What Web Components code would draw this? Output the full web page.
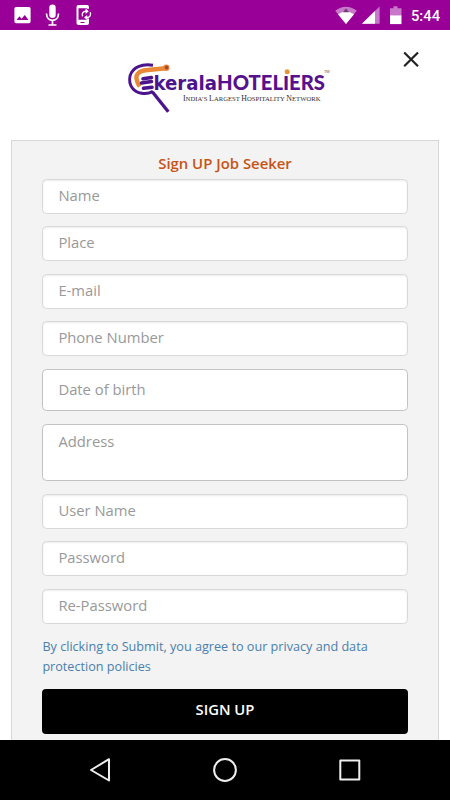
<!DOCTYPE html>
<html lang="en"><head><meta charset="utf-8"><title>Sign UP Job Seeker</title>
<style>html,body{margin:0;height:100%;overflow:hidden;background:#fff;font-family:"Open Sans","Noto Sans",sans-serif}</style></head>
<body><signup-app></signup-app>
<script>
const define=(name,html)=>customElements.define(name,class extends HTMLElement{
  constructor(){super();this.attachShadow({mode:'open'}).innerHTML=html;}
});
define('status-bar',`<style>
:host{display:flex;height:30px;background:#980098;color:#fff;flex:none}
svg{display:block}</style>
<svg width="450" height="30" viewBox="0 0 450 30">
<path fill="#fff" fill-rule="evenodd" d="M16 7h13q1.600 0 1.600 1.600v13q0 1.600-1.600 1.600h-13q-1.600 0-1.600-1.600v-13q0-1.600 1.600-1.600zM16.500 20h12l-3.700-5-3.200 3.800-2.200-2.600z"/>
<rect x="49.300" y="4.500" width="6.400" height="13.400" rx="3.200" fill="#fff"/>
<path d="M46.500 13.500c0 9 12 9 12 0M52.500 20v4.500M48.500 25h8" fill="none" stroke="#fff" stroke-width="1.700"/>
<path fill="#fff" fill-rule="evenodd" d="M78.500 5H87q2 0 2 2v1.800h-2.200V8.200h-8.300v11.600H87v-1.300h2V23q0 2-2 2h-8.500q-2 0-2-2V7q0-2 2-2zM80.500 22h4v1h-4z"/>
<path d="M82.600 16.400c-1.400-3 .8-5.400 3.600-5.100M90.200 12.300c1.400 3-.8 5.500-3.600 5.200" fill="none" stroke="#fff" stroke-width="1.400"/><path d="M85.600 8.600l3.200 2.700-3.200 2.600zM87.200 14.900v5.200l-3.200-2.600z" fill="#fff"/>
<path d="M335.200 10.700Q346 2.800 356.800 10.700L346 24z" fill="#c878c8"/><path d="M338 14.200Q346 9 354 14.200L346 24z" fill="#fff"/><path d="M343 12.200l3-4 3 4z" fill="#713f71"/>
<path d="M379.600 6.500v17.300h-17.700z" fill="#c878c8"/><path d="M375 11v12.800h-13.100z" fill="#fff"/>
<path d="M393.500 6.200h4v2h4v7.300h-11.500V8.200h3.500z" fill="#c878c8"/><path d="M390 15.300h11.500v8.800H390z" fill="#fff"/>
<text x="411" y="21" fill="#fff" font-family="Roboto" font-weight="500" font-size="15.500" textLength="29" lengthAdjust="spacingAndGlyphs">5:44</text>
</svg>`);
define('brand-header',`<style>
:host{display:block;height:110px;flex:none}svg{display:block}</style>
<svg width="450" height="110" viewBox="0 30 450 110">
<path d="M153 65.200C142 63.500 132.500 67 130 76c-2 9.500 4 16.300 11.500 17.300 5 .6 9-.2 11.500-2.200" fill="none" stroke="#4b148c" stroke-width="2.900"/>
<path d="M152.500 92L168.300 111.800" stroke="#4b148c" stroke-width="3.300"/>
<path d="M165.500 68.200L145.500 70.300C139 71 135.500 74.500 136.500 79c.6 3 1.500 5 3.200 7.500" fill="none" stroke="#e98837" stroke-width="4.400"/>
<circle cx="166.200" cy="67.800" r="3.200" fill="#e98837"/>
<circle cx="166.600" cy="67.500" r="1.900" fill="#a8483b"/>
<path d="M143 78.800l8.500-1.300M141.500 83l10-1.500M143.500 88.200l8.500-1" stroke="#4b148c" stroke-width="3.600" stroke-linecap="round"/>
<text x="153.500" y="90" fill="#4b148c" font-family="DejaVu Sans" font-weight="700" font-size="19.500" textLength="63.500" lengthAdjust="spacingAndGlyphs">kerala</text>
<text x="217" y="90" fill="#57118d" font-family="Lato" font-weight="900" font-size="21.500" textLength="108" lengthAdjust="spacingAndGlyphs">HOTELIERS</text>
<path d="M284 73h6v3h-6z" fill="#fff"/>
<circle cx="287.200" cy="71.800" r="2.500" fill="#e29532"/>
<text x="324" y="72.500" fill="#555" font-family="Liberation Sans" font-size="4" textLength="5.500">TM</text>
<text x="183" y="101.300" fill="#302c32" font-family="Liberation Serif" font-size="6.800" textLength="137.500" lengthAdjust="spacingAndGlyphs"><tspan font-size="8">I</tspan>NDIA’S <tspan font-size="8">L</tspan>ARGEST <tspan font-size="8">H</tspan>OSPITALITY <tspan font-size="8">N</tspan>ETWORK</text>
<path d="M404.200 52.500l13.800 13.700M418 52.500l-13.800 13.700" stroke="#222" stroke-width="2.200"/>
</svg>`);
define('form-field',`<style>
:host{display:block;box-sizing:border-box;height:34.700px;border:1.300px solid #d8d8d8;border-radius:4.500px;background:#fff;box-shadow:inset 0 1px 2px #00000014;padding:0 15px;color:#999;font-size:14.800px;line-height:31.500px;flex:none}
:host([tall]){height:42.100px;line-height:39px;border-color:#c2c2c2;box-shadow:none}
:host([area]){height:57.300px;line-height:33.500px;border-color:#c2c2c2;box-shadow:none}
</style><slot></slot>`);
define('submit-button',`<style>
:host{display:flex;align-items:center;justify-content:center;box-sizing:border-box;height:45px;padding-bottom:4px;background:#000;border-radius:4px;color:#fff;font-weight:600;font-size:14.800px;flex:none}
</style><slot></slot>`);
define('form-panel',`<style>
:host{display:flex;flex-direction:column;box-sizing:border-box;margin:0 11px;flex:1;min-height:0;overflow:hidden;background:#f3f3f3;border:solid #d7d7d7;border-width:1.500px 1.500px 0;padding:9px 30.400px 0}
h1{margin:0 0 3px;height:26px;line-height:26px;text-align:center;font-size:14.900px;font-weight:600;color:#c75416}
.f{display:flex;flex-direction:column;gap:12.800px}
p{margin:13px 0 12px;font-size:12.630px;line-height:20px;color:#4a7fae}
</style><h1>Sign UP Job Seeker</h1><div class="f"><form-field>Name</form-field><form-field>Place</form-field><form-field>E-mail</form-field><form-field>Phone Number</form-field><form-field tall>Date of birth</form-field><form-field area>Address</form-field><form-field>User Name</form-field><form-field>Password</form-field><form-field>Re-Password</form-field></div>
<p>By clicking to Submit, you agree to our privacy and data<br>protection policies</p><submit-button>SIGN UP</submit-button>`);
define('nav-bar',`<style>:host{display:block;height:60px;background:#000;flex:none}svg{display:block}</style>
<svg width="450" height="60" viewBox="0 740 450 60" fill="none" stroke="#eee" stroke-width="2" stroke-linejoin="round"><path d="M109 759.200v21.300L91 770z"/><circle cx="225" cy="770" r="10.900"/><rect x="340.300" y="760.500" width="19" height="19"/></svg>`);
define('signup-app',`<style>:host{display:flex;flex-direction:column;width:450px;height:800px}</style>
<status-bar></status-bar><brand-header></brand-header><form-panel></form-panel><nav-bar></nav-bar>`);
</script></body></html>
